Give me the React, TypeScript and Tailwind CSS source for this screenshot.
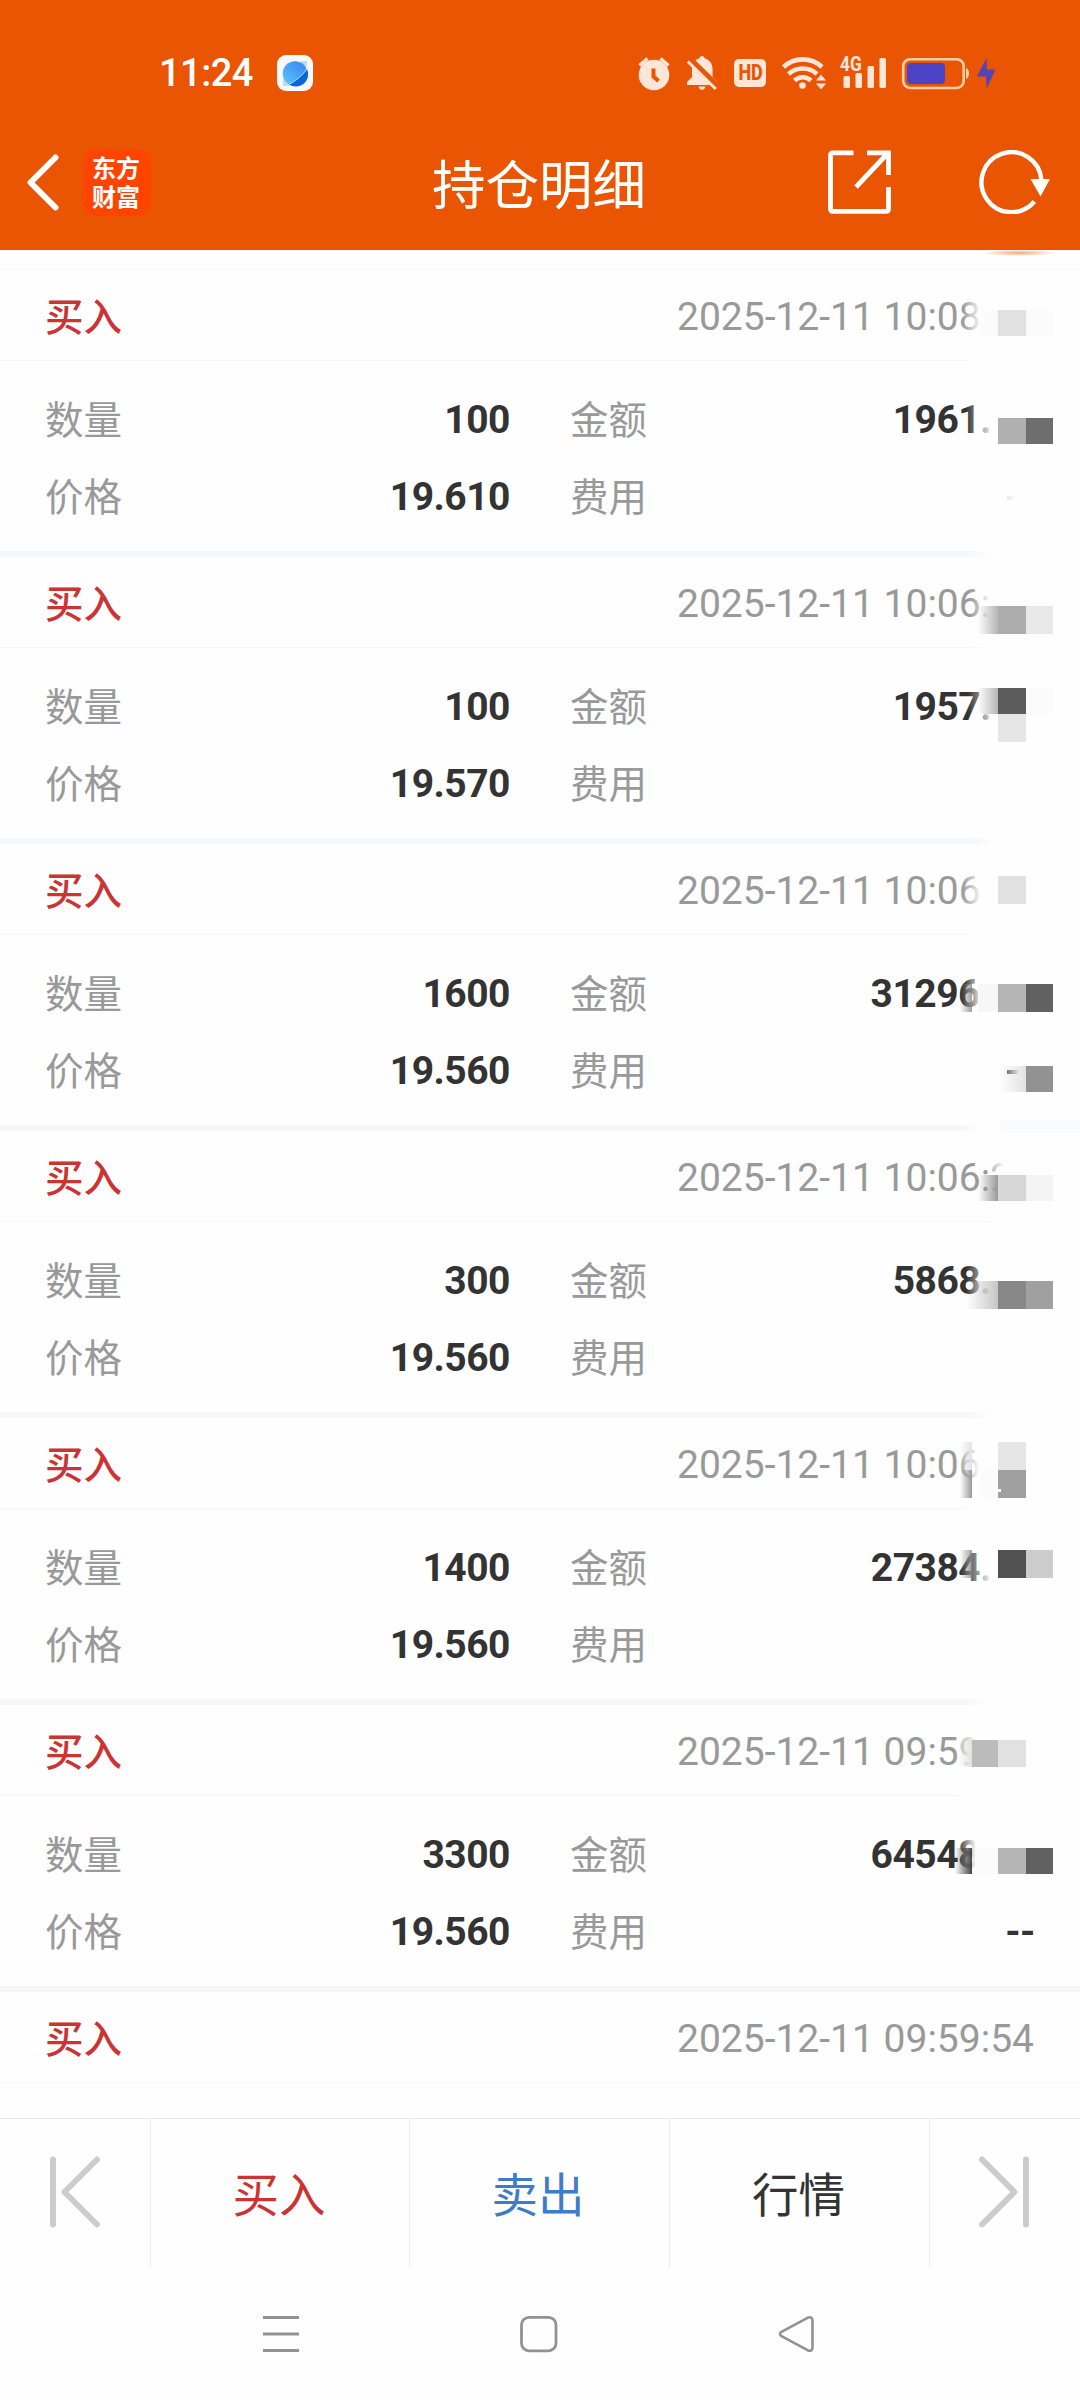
import React from "react";

type Block = { x: number; y: number; w: number; h: number; tone: string };

// Censor tiles use fixed Tailwind classes so that every tone is generated.
const solid = {
  ghost: "bg-[#fbfbfb]",
  f7: "bg-[#f7f7f7]",
  f4: "bg-[#f4f4f4]",
  e9: "bg-[#e9e9e9]",
  e7: "bg-[#e6e6e6]",
  e2: "bg-[#e1e1e1]",
  d7: "bg-[#d7d7d7]",
  cc: "bg-[#cccccc]",
  bb: "bg-[#bbbbbb]",
  b5: "bg-[#b5b5b5]",
  b0: "bg-[#b0b0b0]",
  ad: "bg-[#adadad]",
  a0: "bg-[#a0a0a0]",
  n92: "bg-[#929292]",
  n88: "bg-[#888888]",
  n6e: "bg-[#6e6e6e]",
  n62: "bg-[#616161]",
  n5c: "bg-[#5c5c5c]",
  n51: "bg-[#515151]",
  gF: "bg-linear-to-r from-[#fefefe]/0 to-[#fafafa]",
  gE: "bg-linear-to-r from-[#e5e5e5]/0 to-[#e2e2e2]",
  gC: "bg-linear-to-r from-[#c5c5c5]/0 to-[#c5c5c5]",
  gB: "bg-linear-to-r from-[#b5b5b5]/0 to-[#b5b5b5]",
  g9: "bg-linear-to-r from-[#999999]/0 to-[#999999]",
  g7: "bg-linear-to-r from-[#888888]/0 to-[#888888]/80",
  g4: "bg-linear-to-r from-[#444444]/0 to-[#444444]",
  dash: "bg-linear-to-r from-[#777777] to-[#dddddd]",
  speck: "bg-linear-to-r from-[#e8e8e8] to-[#fefefe]",
  white: "bg-[#fefefe]",
  sep: "bg-linear-to-r from-[#fafbfc]/0 via-[#fafbfc] via-20% to-[#fafbfc]",
} as Record<string, string>;

const b = (x: number, y: number, w: number, h: number, tone: string): Block => ({ x, y, w, h, tone });

type Trade = {
  time: string;
  qty?: string;
  price?: string;
  amount?: string;
  fee?: string;
  fadeTime?: [number, number];
  fadeBody?: [number, number];
  blocks?: Block[];
};

// Block and fade coordinates are relative to the trade card.
const trades: Trade[] = [
  {
    time: "2025-12-11 10:08", qty: "100", price: "19.610", amount: "1961.",
    fadeTime: [962, 20], fadeBody: [966, 28],
    blocks: [
      b(976, 40, 22, 26, "gF"), b(998, 40, 28, 26, "e2"), b(1026, 40, 27, 26, "ghost"),
      b(998, 148, 28, 26, "b0"), b(1026, 148, 27, 26, "n6e"), b(1007, 226, 8, 4, "speck"),
    ],
  },
  {
    time: "2025-12-11 10:06:", qty: "100", price: "19.570", amount: "1957.",
    fadeTime: [970, 22], fadeBody: [968, 28],
    blocks: [
      b(978, 49, 20, 28, "gB"), b(998, 49, 28, 28, "ad"), b(1026, 49, 27, 28, "e9"),
      b(978, 131, 20, 26, "gB"), b(998, 131, 28, 26, "n5c"), b(1026, 131, 27, 26, "ghost"), b(998, 157, 28, 28, "e7"),
    ],
  },
  {
    time: "2025-12-11 10:06", qty: "1600", price: "19.560", amount: "31296",
    fadeTime: [962, 20], fadeBody: [964, 18],
    blocks: [
      b(998, 32, 28, 28, "e2"),
      b(960, 140, 12, 28, "g7"), b(978, 140, 20, 28, "f7"), b(998, 140, 28, 28, "b5"), b(1026, 140, 27, 28, "n62"),
      b(1000, 222, 26, 26, "gE"), b(1026, 222, 27, 26, "n92"), b(1007, 226, 11, 4, "dash"),
      b(992, 275, 88, 27, "sep"),
    ],
  },
  {
    time: "2025-12-11 10:06:2", qty: "300", price: "19.560", amount: "5868.",
    fadeTime: [986, 18], fadeBody: [966, 28],
    blocks: [
      b(978, 44, 20, 26, "g9"), b(998, 44, 28, 26, "d7"), b(1026, 44, 27, 26, "f4"),
      b(967, 150, 31, 28, "gC"), b(998, 150, 28, 28, "n88"), b(1026, 150, 27, 28, "a0"),
    ],
  },
  {
    time: "2025-12-11 10:06", qty: "1400", price: "19.560", amount: "27384.",
    fadeTime: [960, 20], fadeBody: [964, 28],
    blocks: [
      b(960, 24, 12, 28, "gE"), b(960, 52, 12, 28, "g9"), b(980, 52, 18, 28, "ghost"), b(998, 24, 28, 28, "e7"), b(998, 52, 28, 28, "a0"), b(998, 71, 3, 3, "white"),
      b(960, 132, 12, 28, "g7"), b(998, 132, 28, 28, "n51"), b(1026, 132, 27, 28, "cc"),
    ],
  },
  {
    time: "2025-12-11 09:59", qty: "3300", price: "19.560", amount: "64548", fee: "--",
    fadeTime: [954, 22], fadeBody: [958, 18],
    blocks: [
      b(958, 35, 14, 27, "gE"), b(972, 35, 26, 27, "bb"), b(998, 35, 28, 27, "e2"),
      b(955, 143, 17, 26, "g4"), b(976, 143, 22, 26, "ghost"), b(998, 143, 28, 26, "b5"), b(1026, 143, 27, 26, "n62"),
    ],
  },
  { time: "2025-12-11 09:59:54" },
];

function Fade({ x, width, top, height }: { x: number; width: number; top: number; height: number }) {
  return (
    <div className="absolute right-0 flex" style={{ left: x, top, height }}>
      <div className="h-full bg-linear-to-r from-[#fefefe]/0 to-[#fefefe]" style={{ width }} />
      <div className="h-full flex-1 bg-[#fefefe]" />
    </div>
  );
}

function Label({ children }: { children: React.ReactNode }) {
  return <span className="text-[38.500px] text-[#999999]">{children}</span>;
}

function Value({ children }: { children?: React.ReactNode }) {
  return <b className="font-bold tracking-[-0.5px] text-[#333333]">{children}</b>;
}

function TradeCard({ t, last }: { t: Trade; last: boolean }) {
  return (
    <section className="relative text-[39px] leading-[77px]">
      <header className="flex h-[91px] items-center justify-between border-b border-[#f5f6f7] pt-[4px] pr-[45px] pl-[45px]">
        <span className="text-[38.500px] font-medium text-[#cc3333]">买入</span>
        <span className="w-[358px] whitespace-nowrap text-[#999999]">{t.time}</span>
      </header>
      {!last && (
        <div className="grid h-[190px] grid-cols-[465px_465px] content-start gap-x-[60px] pt-[21px] pl-[45px]">
          <div className="flex h-[77px] justify-between">
            <Label>数量</Label>
            <Value>{t.qty}</Value>
          </div>
          <div className={t.amount!.endsWith(".") ? "flex h-[77px] justify-between pr-[44px]" : "flex h-[77px] justify-between pr-[55px]"}>
            <Label>金额</Label>
            <Value>{t.amount}</Value>
          </div>
          <div className="flex h-[77px] justify-between">
            <Label>价格</Label>
            <Value>{t.price}</Value>
          </div>
          <div className="flex h-[77px] justify-between">
            <Label>费用</Label>
            <Value>{t.fee}</Value>
          </div>
        </div>
      )}
      {!last && <div className="h-[6px] bg-[#f6f7f9]" />}
      {t.fadeTime && <Fade x={t.fadeTime[0]} width={t.fadeTime[1]} top={2} height={90} />}
      {t.fadeBody && <Fade x={t.fadeBody[0]} width={t.fadeBody[1]} top={92} height={t.fee ? 100 : 195} />}
      {t.blocks?.map((k, i) => (
        <div key={i} className={`absolute ${solid[k.tone]}`} style={{ left: k.x, top: k.y, width: k.w, height: k.h }} />
      ))}
    </section>
  );
}

function StatusIcons() {
  return (
    <div className="flex h-full items-center text-[#ffe6d8]">
      <svg className="h-[40px] w-[32px]" viewBox="638 52 32 40" fill="currentColor">
        <circle cx="654" cy="74" r="15.3" />
        <path d="M639.5 64.5l8-7M668.500 64.500l-8-7" stroke="currentColor" strokeWidth="3.4" fill="none" />
        <path d="M653.500 67.500v8l5 4.500" stroke="#ea5504" strokeWidth="4" fill="none" />
      </svg>
      <svg className="ml-[17px] h-[40px] w-[31px]" viewBox="687 52 31 40" fill="currentColor">
        <path d="M702 55c1.500 0 2.500 1 2.500 2.300 5 1.300 8 5.200 8 10.700v8l5 5v3H687v-3l5-5v-8c0-5.500 3-9.400 7.500-10.700C699.500 56 700.500 55 702 55zM698.500 85.500h7c-.5 2-1.700 3.300-3.500 3.300s-3-1.300-3.500-3.300z" />
        <path d="M688.500 57.500l29.500 29" stroke="#ea5504" strokeWidth="7" />
        <path d="M687.800 60.500l28 27.500" stroke="currentColor" strokeWidth="3" />
      </svg>
      <span className="ml-[16px] flex h-[28px] w-[32px] items-center justify-center rounded-[5px] bg-[#ffe6d8] font-[Roboto] text-[22px] leading-none font-extrabold tracking-[-0.5px] text-[#ea5504]">
        <span className="scale-x-[0.82]">HD</span>
      </span>
      <svg className="ml-[16px] h-[40px] w-[44px]" viewBox="782 52 44 40" fill="none" stroke="currentColor" strokeWidth="4.600">
        <path d="M783.500 66a28 28 0 0 1 38.500 0M788.500 73a21 21 0 0 1 28.500 0M794.500 79.500a12 12 0 0 1 16.500 0" />
        <circle cx="802.500" cy="84.500" r="3.300" fill="currentColor" stroke="none" />
        <path d="M816 79.500l5-6 5 6zM816 82.500l5 6 5-6z" fill="currentColor" stroke="none" />
      </svg>
      <div className="relative ml-[14px] h-[40px] w-[46px]">
        <span className="absolute top-[2px] left-0 origin-left scale-x-[0.82] font-[Roboto] text-[21px] leading-[19px] font-bold">4G</span>
        <svg className="h-[40px] w-[46px]" viewBox="840 52 46 40" fill="currentColor">
          <rect x="843.500" y="75" width="6.500" height="12" rx="1.500" />
          <rect x="855.500" y="72" width="6.500" height="15" rx="1.500" />
          <rect x="867.500" y="65" width="6.500" height="22" rx="1.500" />
          <rect x="879.500" y="57" width="6.500" height="30" rx="1.500" />
        </svg>
      </div>
      <svg className="ml-[15px] h-[40px] w-[94px]" viewBox="901 52 94 40" fill="none">
        <rect x="903.200" y="58.200" width="60.500" height="28.800" rx="7" stroke="#ffd0a6" strokeWidth="2.600" />
        <rect x="907" y="62" width="38" height="21" rx="4" fill="#4b43c6" />
        <path d="M966 67c4 1 4 10 0 11z" fill="#ffd0a6" />
        <path d="M986.500 57L977 75.500h9L986.500 88 995.500 68.500h-8.500z" fill="#5544b4" />
      </svg>
    </div>
  );
}

export default function App() {
  return (
    <main
      lang="zh-CN"
      className="flex h-[2400px] w-[1080px] flex-col overflow-hidden bg-[#fefefe] font-[Roboto,'Noto_Sans_CJK_SC',sans-serif]"
    >
      <div className="h-[250px] shrink-0 bg-[#ea5504] text-white">
        <div className="flex h-[115px] justify-between pt-[50px] pr-[85px] pb-[19px] pl-[159px]">
          <div className="flex items-center">
            <span className="w-[118px] text-[38px] leading-none font-medium tracking-[-0.5px]">11:24</span>
            <svg className="h-[36px] w-[36px]" viewBox="0 0 36 36">
              <defs>
                <linearGradient id="planet" x1="0" y1="1" x2="1" y2="0">
                  <stop offset="0" stopColor="#5cc8ff" />
                  <stop offset="1" stopColor="#3a7ff0" />
                </linearGradient>
              </defs>
              <rect width="36" height="36" rx="9" fill="#f6faff" />
              <path d="M6 31V24L24 6h6v5L12 31z" fill="#b9dcfb" />
              <circle cx="18" cy="18.500" r="12.300" fill="url(#planet)" />
              <path d="M30.200 14.500A12.300 12.300 0 0 1 12 29.500Q24 23 30.200 14.500z" fill="#0d63de" />
              <path d="M11 30Q24 23.500 30.300 13" stroke="#9fe3ff" strokeWidth="1" fill="none" />
            </svg>
          </div>
          <StatusIcons />
        </div>
        <div className="grid h-[134px] grid-cols-[1fr_auto_1fr] items-center pr-[30px] pl-[26px]">
          <div className="flex items-center">
            <svg className="h-[58px] w-[34px]" viewBox="0 0 34 58" fill="none" stroke="white" strokeWidth="6" strokeLinecap="round" strokeLinejoin="round">
              <path d="M29.500 4.500L4.500 29.500l25 25" />
            </svg>
            <div className="ml-[23px] h-[67px] w-[68px] rounded-[14px] bg-[#ff4400] px-[9px] pt-[3px] font-['Noto_Sans_CJK_SC'] text-[24px] leading-[29px] font-bold break-all">
              东方财富
            </div>
          </div>
          <h1 className="relative top-[2px] left-[1px] pt-[6px] text-[53.500px] leading-none">持仓明细</h1>
          <div className="flex items-center justify-end">
            <svg className="h-[64px] w-[64px]" viewBox="0 0 64 64" fill="none" stroke="white" strokeWidth="4.800">
              <path d="M26.500 2.800H5.500a2 2 0 0 0-2 2v54.500a2 2 0 0 0 2 2h54a2 2 0 0 0 2-2V37M40 2.800h21.500V25M61 3L29 37" />
            </svg>
            <svg className="ml-[88px] h-[64px] w-[71px]" viewBox="979 150 71 64" fill="none">
              <path d="M1041.400 180a30 30 0 1 0-7 21.500" stroke="white" strokeWidth="4.400" />
              <path d="M1030.500 179h19.500l-9.500 17.500z" fill="white" />
            </svg>
          </div>
        </div>
      </div>
      <div className="relative h-[20px] shrink-0 border-b border-[#f5f6f7]">
        <div className="absolute top-0 left-[982px] h-[6px] w-[74px] bg-radial-[closest-side] from-[#f4a477] to-[#fefefe]" />
      </div>
      <div className="h-[1848px] shrink-0 overflow-hidden">
        {trades.map((t, i) => (
          <TradeCard key={i} t={t} last={i === trades.length - 1} />
        ))}
      </div>
      <nav className="grid h-[150px] shrink-0 grid-cols-[150px_259px_260px_260px_151px] border-t border-[#e9e9e9] text-[46.500px] [&>*]:flex [&>*]:items-center [&>*]:justify-center [&>*+*]:border-l [&>*+*]:border-[#ececec]">
        <div className="pb-[4px]">
          <svg className="h-[72px] w-[52px]" viewBox="0 0 52 72" fill="none" stroke="#cccccc" strokeWidth="6" strokeLinecap="round" strokeLinejoin="round">
            <path d="M4 3.500v65M48 3.500L15.500 36 48 68.500" />
          </svg>
        </div>
        <div className="pt-[6px] pr-[2px] text-[#cc3333]">买入</div>
        <div className="pt-[6px] pr-[3px] text-[#3d7cc9]">卖出</div>
        <div className="pt-[6px] pr-[2px] text-[#333333]">行情</div>
        <div className="pr-[2px] pb-[4px]">
          <svg className="h-[72px] w-[52px]" viewBox="0 0 52 72" fill="none" stroke="#cccccc" strokeWidth="6" strokeLinecap="round" strokeLinejoin="round">
            <path d="M48 3.500v65M4 3.500L36.500 36 4 68.500" />
          </svg>
        </div>
      </nav>
      <div className="flex flex-1 justify-center gap-[220px] pt-[46px] pr-[2px]">
        <svg className="h-[40px] w-[38px]" viewBox="0 0 38 40" stroke="#929292" strokeWidth="3">
          <path d="M1 3.500h36M1 20h36M1 36.500h36" />
        </svg>
        <svg className="h-[40px] w-[38px]" viewBox="0 0 38 40" fill="none" stroke="#929292" strokeWidth="2.800">
          <rect x="1.500" y="3.300" width="34.500" height="33.500" rx="7.500" />
        </svg>
        <svg className="h-[40px] w-[38px]" viewBox="0 0 38 40" fill="none" stroke="#929292" strokeWidth="2.600" strokeLinejoin="round">
          <path d="M3.500 17.800L29.500 3.800Q34.500 2 34.500 7v26Q34.500 38 29.500 36.200L3.500 22.200Q.5 20 3.500 17.800z" />
        </svg>
      </div>
    </main>
  );
}
